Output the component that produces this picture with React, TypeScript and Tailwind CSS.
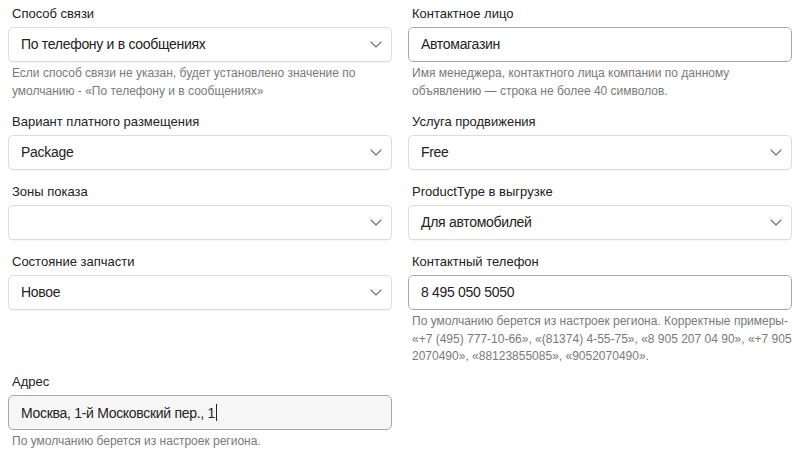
import React from 'react';

const font = { fontFamily: '"Liberation Sans", Arial, sans-serif' };

const Chevron: React.FC = () => (
  <svg width="12" height="7" viewBox="0 0 12 7" fill="none" className="shrink-0">
    <path d="M1 1l5 5 5-5" stroke="#707070" strokeWidth="1.1" strokeLinecap="round" strokeLinejoin="round" />
  </svg>
);

type FieldProps = {
  label: string;
  value?: string;
  kind: 'select' | 'input' | 'active';
  hint?: React.ReactNode;
  className?: string;
};

const Field: React.FC<FieldProps> = ({ label, value, kind, hint, className = '' }) => {
  const box =
    kind === 'select'
      ? 'border-[#dcdcdc] bg-white shadow-[0_1px_1px_rgba(0,0,0,0.04)] pr-[9px]'
      : kind === 'input'
      ? 'border-[#a8a8a8] bg-white pr-3'
      : 'border-[#a8a8a8] bg-[#f6f6f6] pr-3';

  return (
    <div className={`flex flex-col ${className}`}>
      <div className="pl-1 text-[13px] leading-[18px] text-[#222]">{label}</div>
      <div className={`mt-1 flex h-[35px] items-center justify-between rounded-[5px] border pl-3 ${box}`}>
        <span className="text-[14px] tracking-[-0.3px] text-[#222]">
          {value}
          {kind === 'active' && <span className="ml-px inline-block h-[17px] w-px translate-y-[3px] bg-[#222]" />}
        </span>
        {kind === 'select' && <Chevron />}
      </div>
      {hint && <div className="mt-[3px] pl-1 text-[12px] leading-[17.5px] text-[#7a7a7a]">{hint}</div>}
    </div>
  );
};

export default function App() {
  return (
    <div className="min-h-screen bg-white px-2 pt-[5px]" style={font}>
      <div className="grid grid-cols-2 gap-x-4 gap-y-[13px]">
        <Field
          label="Способ связи"
          value="По телефону и в сообщениях"
          kind="select"
          hint={<>Если способ связи не указан, будет установлено значение по умолчанию - «По телефону и в сообщениях»</>}
        />
        <Field
          label="Контактное лицо"
          value="Автомагазин"
          kind="input"
          hint={<>Имя менеджера, контактного лица компании по данному объявлению — строка не более 40 символов.</>}
        />
        <Field label="Вариант платного размещения" value="Package" kind="select" />
        <Field label="Услуга продвижения" value="Free" kind="select" />
        <Field label="Зоны показа" value="" kind="select" />
        <Field label="ProductType в выгрузке" value="Для автомобилей" kind="select" />
        <Field label="Состояние запчасти" value="Новое" kind="select" />
        <Field
          label="Контактный телефон"
          value="8 495 050 5050"
          kind="input"
          hint={
            <>
              По умолчанию берется из настроек региона. Корректные примеры- «+7 (495) 777-10-66», «(81374) 4-55-75», «8 905 207 04 90», «+7 905 2070490», «88123855085», «9052070490».
            </>
          }
        />
        <Field
          label="Адрес"
          value="Москва, 1-й Московский пер., 1"
          kind="active"
          className="-mt-[6px]"
          hint={<>По умолчанию берется из настроек региона.</>}
        />
      </div>
    </div>
  );
}
